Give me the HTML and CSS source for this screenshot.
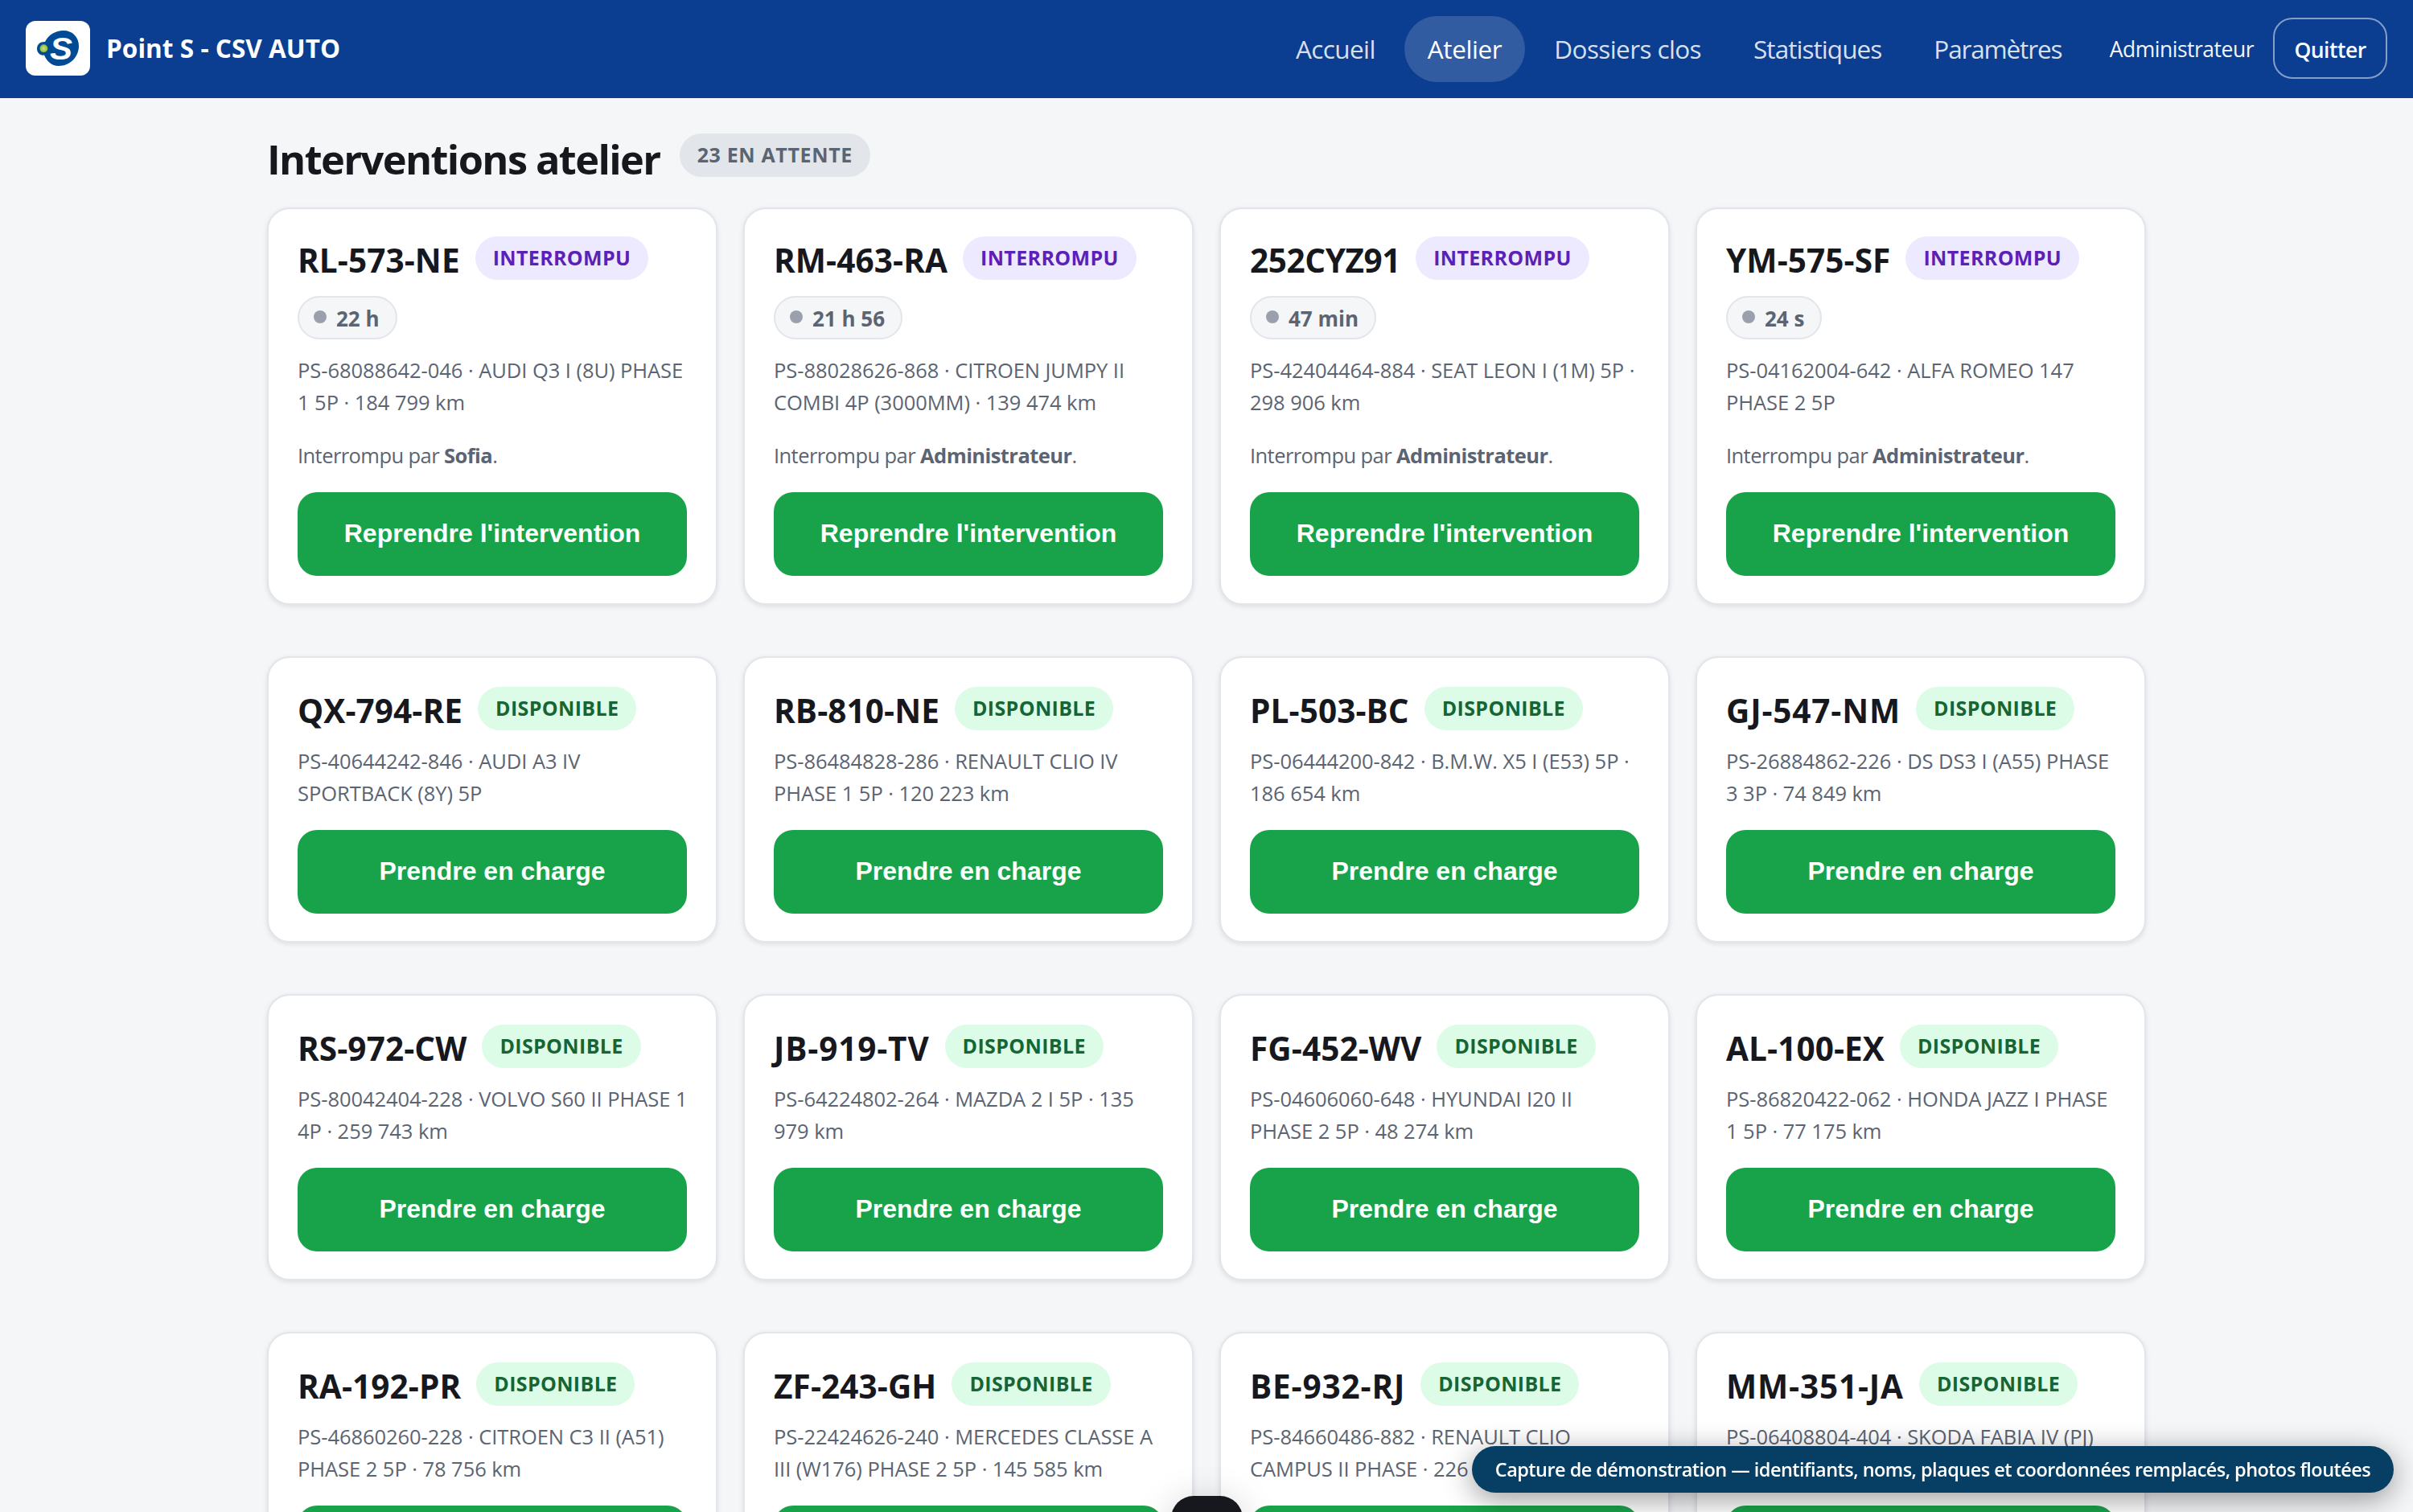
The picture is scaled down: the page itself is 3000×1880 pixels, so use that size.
FILE: index.html
```html
<!DOCTYPE html>
<html lang="fr">
<head>
    <meta charset="UTF-8">
    <meta name="viewport" content="width=device-width, initial-scale=1.0">
    <title>Point S - CSV AUTO - Atelier</title>
    <link rel="stylesheet" href="styles.css">
</head>
<body>
    <header class="topbar">
        <a class="brand" href="#">
            <svg class="brand-logo" viewBox="0 0 80 68">
                <defs>
                    <radialGradient id="dot">
                        <stop offset="0" stop-color="#d3de86"/>
                        <stop offset="1" stop-color="#86bc3c"/>
                    </radialGradient>
                </defs>
                <path fill="#004b93" d="M47 12C58 12 66 20 66 31C66 45 55 56 41 56C32 56 26 50 23 42.500C18 43.500 14 39.500 14 34.500C14 29 18.500 25.500 24 26C28 17.500 37 12 47 12Z"/>
                <circle cx="22.400" cy="34.200" r="4.900" fill="url(#dot)"/>
                <text class="logo-letter" x="30" y="47.500" textLength="28" lengthAdjust="spacingAndGlyphs">S</text>
            </svg>
            <span class="brand-name">Point S - CSV AUTO</span>
        </a>
        <nav class="nav-links">
            <a href="#">Accueil</a>
            <a href="#" class="active">Atelier</a>
            <a href="#">Dossiers clos</a>
            <a href="#">Statistiques</a>
            <a href="#">Paramètres</a>
        </nav>
        <span class="user">Administrateur</span>
        <button class="logout">Quitter</button>
    </header>

    <main class="container">
        <div class="page-head">
            <h1>Interventions atelier</h1>
            <span class="badge badge-count">23 EN ATTENTE</span>
        </div>

        <div class="grid">
            <article class="card paused">
                <div class="card-head"><h2>RL-573-NE</h2><span class="badge badge-paused">INTERROMPU</span></div>
                <span class="timer">22 h</span>
                <p class="meta">PS-68088642-046 · AUDI Q3 I (8U) PHASE<br>1 5P · 184 799 km</p>
                <p class="note">Interrompu par <strong>Sofia</strong>.</p>
                <button class="btn">Reprendre l'intervention</button>
            </article>
            <article class="card paused">
                <div class="card-head"><h2>RM-463-RA</h2><span class="badge badge-paused">INTERROMPU</span></div>
                <span class="timer">21 h 56</span>
                <p class="meta">PS-88028626-868 · CITROEN JUMPY II<br>COMBI 4P (3000MM) · 139 474 km</p>
                <p class="note">Interrompu par <strong>Administrateur</strong>.</p>
                <button class="btn">Reprendre l'intervention</button>
            </article>
            <article class="card paused">
                <div class="card-head"><h2 class="narrow">252CYZ91</h2><span class="badge badge-paused">INTERROMPU</span></div>
                <span class="timer">47 min</span>
                <p class="meta">PS-42404464-884 · SEAT LEON I (1M) 5P ·<br>298 906 km</p>
                <p class="note">Interrompu par <strong>Administrateur</strong>.</p>
                <button class="btn">Reprendre l'intervention</button>
            </article>
            <article class="card paused">
                <div class="card-head"><h2>YM-575-SF</h2><span class="badge badge-paused">INTERROMPU</span></div>
                <span class="timer">24 s</span>
                <p class="meta">PS-04162004-642 · ALFA ROMEO 147<br>PHASE 2 5P</p>
                <p class="note">Interrompu par <strong>Administrateur</strong>.</p>
                <button class="btn">Reprendre l'intervention</button>
            </article>

            <article class="card">
                <div class="card-head"><h2>QX-794-RE</h2><span class="badge badge-free">DISPONIBLE</span></div>
                <p class="meta">PS-40644242-846 · AUDI A3 IV<br>SPORTBACK (8Y) 5P</p>
                <button class="btn">Prendre en charge</button>
            </article>
            <article class="card">
                <div class="card-head"><h2>RB-810-NE</h2><span class="badge badge-free">DISPONIBLE</span></div>
                <p class="meta">PS-86484828-286 · RENAULT CLIO IV<br>PHASE 1 5P · 120 223 km</p>
                <button class="btn">Prendre en charge</button>
            </article>
            <article class="card">
                <div class="card-head"><h2>PL-503-BC</h2><span class="badge badge-free">DISPONIBLE</span></div>
                <p class="meta">PS-06444200-842 · B.M.W. X5 I (E53) 5P ·<br>186 654 km</p>
                <button class="btn">Prendre en charge</button>
            </article>
            <article class="card">
                <div class="card-head"><h2 class="wide">GJ-547-NM</h2><span class="badge badge-free">DISPONIBLE</span></div>
                <p class="meta">PS-26884862-226 · DS DS3 I (A55) PHASE<br>3 3P · 74 849 km</p>
                <button class="btn">Prendre en charge</button>
            </article>

            <article class="card">
                <div class="card-head"><h2>RS-972-CW</h2><span class="badge badge-free">DISPONIBLE</span></div>
                <p class="meta">PS-80042404-228 · VOLVO S60 II PHASE 1<br>4P · 259 743 km</p>
                <button class="btn">Prendre en charge</button>
            </article>
            <article class="card">
                <div class="card-head"><h2 class="wide">JB-919-TV</h2><span class="badge badge-free">DISPONIBLE</span></div>
                <p class="meta">PS-64224802-264 · MAZDA 2 I 5P · 135<br>979 km</p>
                <button class="btn">Prendre en charge</button>
            </article>
            <article class="card">
                <div class="card-head"><h2>FG-452-WV</h2><span class="badge badge-free">DISPONIBLE</span></div>
                <p class="meta">PS-04606060-648 · HYUNDAI I20 II<br>PHASE 2 5P · 48 274 km</p>
                <button class="btn">Prendre en charge</button>
            </article>
            <article class="card">
                <div class="card-head"><h2>AL-100-EX</h2><span class="badge badge-free">DISPONIBLE</span></div>
                <p class="meta">PS-86820422-062 · HONDA JAZZ I PHASE<br>1 5P · 77 175 km</p>
                <button class="btn">Prendre en charge</button>
            </article>

            <article class="card">
                <div class="card-head"><h2>RA-192-PR</h2><span class="badge badge-free">DISPONIBLE</span></div>
                <p class="meta">PS-46860260-228 · CITROEN C3 II (A51)<br>PHASE 2 5P · 78 756 km</p>
                <button class="btn">Prendre en charge</button>
            </article>
            <article class="card">
                <div class="card-head"><h2>ZF-243-GH</h2><span class="badge badge-free">DISPONIBLE</span></div>
                <p class="meta">PS-22424626-240 · MERCEDES CLASSE A<br>III (W176) PHASE 2 5P · 145 585 km</p>
                <button class="btn">Prendre en charge</button>
            </article>
            <article class="card">
                <div class="card-head"><h2 class="wide">BE-932-RJ</h2><span class="badge badge-free">DISPONIBLE</span></div>
                <p class="meta">PS-84660486-882 · RENAULT CLIO<br>CAMPUS II PHASE · 226</p>
                <button class="btn">Prendre en charge</button>
            </article>
            <article class="card">
                <div class="card-head"><h2 class="wide">MM-351-JA</h2><span class="badge badge-free">DISPONIBLE</span></div>
                <p class="meta">PS-06408804-404 · SKODA FABIA IV (PJ)</p>
                <button class="btn">Prendre en charge</button>
            </article>
        </div>
    </main>

    <div class="snackbar"></div>
    <div class="demo-banner">Capture de démonstration — identifiants, noms, plaques et coordonnées remplacés, photos floutées</div>
</body>
</html>
```
FILE: styles.css
```css
:root {
    --primary: #0b3d91;
    --bg: #f4f6f8;
    --text: #16181d;
    --muted: #5b6472;
    --border: #e2e5ea;
    --green: #18a34a;
}
* {
    box-sizing: border-box;
}
body {
    margin: 0;
    height: 1880px;
    overflow: hidden;
    background: var(--bg);
    color: var(--text);
    font-family: "Open Sans", "Noto Sans", sans-serif;
    font-size: 32px;
}

/* Header */
.topbar {
    display: flex;
    align-items: center;
    height: 122px;
    padding: 0 32px;
    background: var(--primary);
    color: #fff;
}
.brand {
    display: flex;
    align-items: center;
    gap: 20px;
    margin-right: auto;
    color: #fff;
    text-decoration: none;
}
.brand-logo {
    width: 80px;
    height: 68px;
    margin-bottom: 2px;
    background: #fff;
    border-radius: 12px;
}
.logo-letter {
    fill: #fff;
    font: italic bold 38px "Liberation Sans", Arial, sans-serif;
}
.brand-name {
    padding-bottom: 4px;
    font-weight: 700;
    font-size: 31.5px;
    letter-spacing: 0.05px;
}
.nav-links {
    display: flex;
    gap: 8px;
    margin-right: 31px;
}
.nav-links a {
    padding: 0 28.5px;
    border-radius: 999px;
    color: rgba(255, 255, 255, 0.85);
    font-size: 31.5px;
    line-height: 81px;
    height: 82px;
    letter-spacing: -0.6px;
    text-decoration: none;
}
.nav-links a.active {
    background: rgba(255, 255, 255, 0.16);
    color: #fff;
    letter-spacing: -0.4px;
}
.nav-links a:nth-child(n+4) {
    letter-spacing: -0.95px;
}
.nav-links a:last-child {
    letter-spacing: -1.15px;
}
.user {
    margin-right: 24px;
    font-size: 26.5px;
    letter-spacing: -0.5px;
    opacity: 0.95;
}
.logout {
    width: 142px;
    height: 76px;
    margin-bottom: 2px;
    padding: 4px 0 0;
    border: 2px solid rgba(255, 255, 255, 0.5);
    border-radius: 24px;
    background: transparent;
    color: #fff;
    font: 600 26.5px "Open Sans", sans-serif;
    letter-spacing: -0.5px;
}

/* Page */
.container {
    width: 2336px;
    margin: 0 auto;
}
.page-head {
    display: flex;
    align-items: center;
    gap: 24px;
    height: 136px;
    padding-top: 16px;
}
.page-head h1 {
    margin: 0;
    font-size: 50.5px;
    line-height: 70px;
    letter-spacing: -1.6px;
}
.badge {
    height: 54px;
    padding: 0 22px;
    border-radius: 999px;
    font-size: 25px;
    font-weight: 700;
    line-height: 53px;
    letter-spacing: 0.35px;
    white-space: nowrap;
}
.badge-count {
    margin-bottom: 10px;
    background: var(--border);
    color: var(--muted);
    letter-spacing: 0.65px;
}
.badge-paused {
    background: #ede9fe;
    color: #5b21b6;
}
.badge-free {
    background: #dcfce7;
    color: #166534;
}
.grid {
    display: grid;
    grid-template-columns: repeat(4, minmax(0, 1fr));
    gap: 64px 32px;
}

/* Cards */
.card {
    display: flex;
    flex-direction: column;
    height: 356px;
    padding: 36px 36px 34px;
    background: #fff;
    border: 2px solid var(--border);
    border-radius: 28px;
    box-shadow: 0 2px 6px rgba(0, 0, 0, 0.1);
}
.card.paused {
    height: 494px;
    padding-top: 34px;
}
.card-head {
    display: flex;
    gap: 19px;
    height: 54px;
}
.card-head h2 {
    margin: 0;
    font-size: 40.5px;
    line-height: 59px;
    letter-spacing: 0.1px;
    white-space: nowrap;
}
.card-head h2.wide {
    letter-spacing: 0.85px;
}
.card-head h2.narrow {
    letter-spacing: -0.4px;
}
.timer {
    display: flex;
    align-items: center;
    align-self: flex-start;
    gap: 12px;
    height: 54px;
    margin-top: 20px;
    padding: 2px 20px 0 18px;
    border: 2px solid var(--border);
    border-radius: 999px;
    background: var(--bg);
    color: var(--muted);
    font-size: 26px;
    font-weight: 700;
}
.timer::before {
    content: "";
    width: 16px;
    height: 16px;
    margin-bottom: 4px;
    border-radius: 50%;
    background: #9aa1ad;
}
.meta {
    height: 80px;
    margin: 18px 0 0;
    color: var(--muted);
    font-size: 25.5px;
    line-height: 40px;
    letter-spacing: -0.05px;
    white-space: nowrap;
}
.note {
    margin: 26px 0 0;
    color: var(--muted);
    font-size: 25.5px;
    line-height: 40px;
    letter-spacing: -0.57px;
}
.btn {
    width: 100%;
    height: 104px;
    margin-top: auto;
    padding: 0 0 2px;
    border: none;
    border-radius: 24px;
    background: var(--green);
    color: #fff;
    font: bold 32px "Liberation Sans", Arial, sans-serif;
}

/* Overlays */
.snackbar {
    position: fixed;
    left: 1456px;
    top: 1860px;
    width: 89px;
    height: 60px;
    border-radius: 28px;
    background: var(--text);
    box-shadow: 0 8px 48px rgba(0, 0, 0, 0.2);
}
.demo-banner {
    position: fixed;
    right: 24px;
    bottom: 24px;
    width: 1146px;
    height: 58px;
    border-radius: 999px;
    background: #063f63;
    box-shadow: 0 8px 36px rgba(0, 0, 0, 0.4);
    color: #fff;
    font-size: 23.5px;
    font-weight: 600;
    line-height: 58px;
    letter-spacing: -0.54px;
    text-align: center;
    white-space: nowrap;
}
```
